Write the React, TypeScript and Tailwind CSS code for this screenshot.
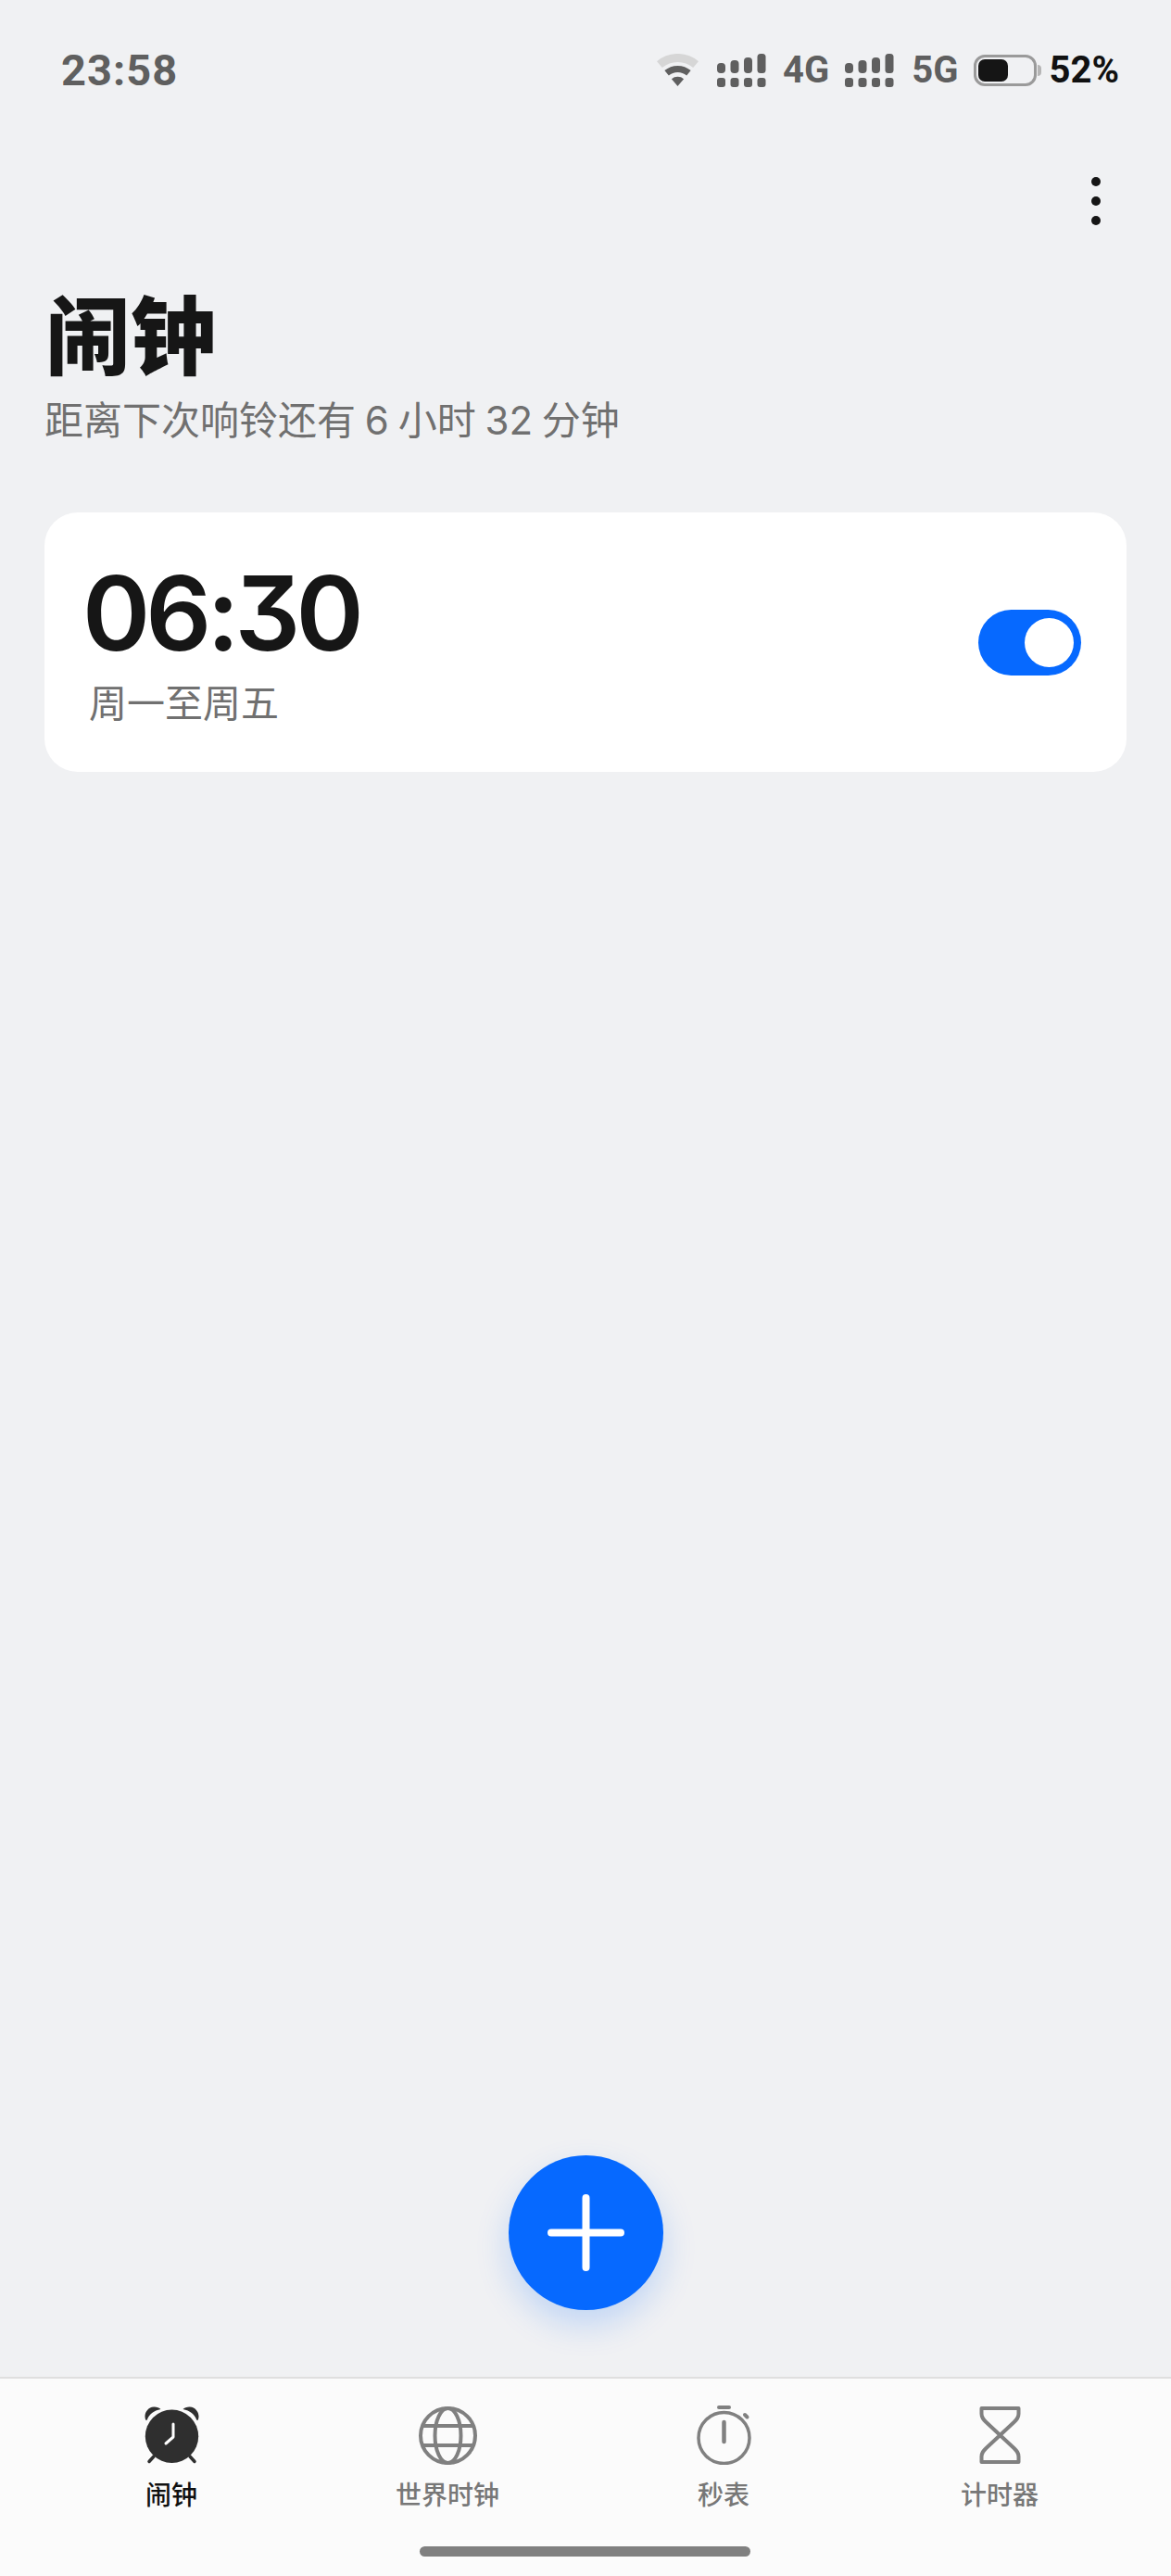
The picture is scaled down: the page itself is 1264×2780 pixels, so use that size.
import React from 'react';

const sans = "font-['Inter','Noto_Sans_CJK_SC',sans-serif]";

// status bar signal bars, 4 columns over a row of dots
const Signal = () => (
  <svg width="53" height="36" viewBox="0 0 53 36" className="block" fill="#5f5f5f">
    <rect x="0" y="10" width="9" height="11" rx="4" />
    <rect x="14.5" y="7" width="9" height="14" rx="4" />
    <rect x="29" y="4" width="9" height="17" rx="4" />
    <rect x="43.5" y="0" width="9" height="21" rx="3.5" />
    <rect x="0" y="26" width="9" height="10" rx="3" />
    <rect x="14.5" y="26" width="9" height="10" rx="3" />
    <rect x="29" y="26" width="9" height="10" rx="3" />
    <rect x="43.5" y="26" width="9" height="10" rx="3" />
  </svg>
);

const Wifi = () => (
  <svg width="45" height="36" viewBox="0 0 45 36" className="block" fill="none">
    <path d="M2.9 11.6A30.5 30.5 0 0 1 42.1 11.6" stroke="#d6d6d6" strokeWidth="9" />
    <path d="M10.6 20.8A18.5 18.5 0 0 1 34.4 20.8" stroke="#5f5f5f" strokeWidth="7" />
    <path d="M22.5 35L15.9 27.3A10 10 0 0 1 29.1 27.3Z" fill="#5f5f5f" />
  </svg>
);

const AlarmIcon = () => (
  <svg width="59" height="62" viewBox="0 0 59 62" className="block" fill="#2f2f2f">
    <path d="M1 14C-1 8 3 1 10 .5 13 .3 16 1.5 17.5 3 10 4.5 5 8.500 3 14 2.500 15.200 1.500 15.200 1 14Z" />
    <path d="M58 14C60 8 56 1 49 .5 46 .3 43 1.500 41.500 3 49 4.500 54 8.500 56 14 56.500 15.200 57.500 15.200 58 14Z" />
    <circle cx="29.500" cy="32.300" r="28.700" />
    <path d="M10 54L5 59.500M49 54L54 59.500" stroke="#2f2f2f" strokeWidth="3.500" strokeLinecap="round" />
    <path d="M31 19V33L23 40" fill="none" stroke="#fff" strokeWidth="3" strokeLinecap="round" strokeLinejoin="round" />
  </svg>
);

const GlobeIcon = () => (
  <svg width="63" height="63" viewBox="0 0 63 63" className="block" fill="none" stroke="#808080" strokeWidth="4">
    <circle cx="31.500" cy="31.500" r="29.500" />
    <ellipse cx="31.500" cy="31.500" rx="14" ry="29.500" />
    <path d="M5 21H58M5 42H58" />
  </svg>
);

const StopwatchIcon = () => (
  <svg width="59" height="64" viewBox="0 0 59 64" className="block" fill="none" stroke="#808080">
    <circle cx="29.500" cy="35" r="27.500" strokeWidth="3.500" />
    <path d="M24 2H35" strokeWidth="4" strokeLinecap="round" />
    <path d="M52 10L54.500 12.500" strokeWidth="4" strokeLinecap="round" />
    <path d="M29.500 18V39" strokeWidth="4.500" strokeLinecap="round" />
  </svg>
);

const HourglassIcon = () => (
  <svg width="45" height="62" viewBox="0 0 45 62" className="block" fill="none" stroke="#808080" strokeWidth="4" strokeLinejoin="round">
    <path d="M2.500 2H42.500V8C42.500 12 40.500 14 37.500 17L7.500 45C4.500 48 2.500 50 2.500 54V60H42.500V54C42.500 50 40.500 48 37.500 45L7.500 17C4.500 14 2.500 12 2.500 8Z" />
  </svg>
);

const tabs = [
  { label: '闹钟', icon: <AlarmIcon />, active: true },
  { label: '世界时钟', icon: <GlobeIcon />, active: false },
  { label: '秒表', icon: <StopwatchIcon />, active: false },
  { label: '计时器', icon: <HourglassIcon />, active: false },
];

const App = () => {
  return (
    <div className={`h-[2780px] w-[1264px] flex flex-col bg-[#f0f1f3] overflow-hidden ${sans}`}>
      {/* Status bar */}
      <div className="mt-[57px] h-[37px] pl-[66px] pr-[56px] flex items-center justify-between">
        <span className="text-[47px] leading-[37px] font-bold tracking-[1px] text-[#5f5f5f] font-['Roboto',sans-serif]">23:58</span>
        <div className="flex items-center font-['Roboto',sans-serif] font-bold text-[40px] leading-[37px] text-[#5f5f5f]">
          <Wifi />
          <div className="ml-[20px]"><Signal /></div>
          <span className="ml-[18px]">4G</span>
          <div className="ml-[17px]"><Signal /></div>
          <span className="ml-[19px]">5G</span>
          <div className="ml-[16px] flex items-center">
            <div className="w-[68px] h-[34px] rounded-[12px] border-[3px] border-[#9a9a9a] p-[2px]">
              <div className="w-[32px] h-full rounded-[7px] bg-[#151515]"></div>
            </div>
            <div className="ml-[1px] w-[4px] h-[12px] rounded-r-full bg-[#b5b5b5]"></div>
          </div>
          <span className="ml-[9px] text-[#111111]">52%</span>
        </div>
      </div>

      {/* Overflow menu */}
      <div className="mt-[97px] h-[52px] pr-[76px] flex justify-end">
        <div className="flex flex-col justify-between">
          <div className="w-[10px] h-[10px] rounded-full bg-[#151515]"></div>
          <div className="w-[10px] h-[10px] rounded-full bg-[#151515]"></div>
          <div className="w-[10px] h-[10px] rounded-full bg-[#151515]"></div>
        </div>
      </div>

      {/* Title */}
      <div className="px-[48px]">
        <h1 className="mt-[69px] pl-[1px] text-[92px] leading-[104px] font-black text-[#161616]">闹钟</h1>
        <p className="mt-[13px] text-[42px] leading-[50px] [word-spacing:-2px] text-[#707070]">距离下次响铃还有 6 小时 32 分钟</p>
      </div>

      {/* Alarm card */}
      <div className="mx-[48px] mt-[74px] h-[280px] rounded-[36px] bg-white pl-[44px] pr-[49px] flex items-center justify-between">
        <div className="flex flex-col gap-[15px]">
          <div className="text-[111px] leading-[116px] font-semibold tracking-[-5px] text-[#161616] [font-feature-settings:'cv09'] -ml-[3px]">06:30</div>
          <div className="text-[41px] leading-[48px] text-[#707070] ml-[4px]">周一至周五</div>
        </div>
        <div className="w-[111px] h-[71px] rounded-full bg-[#0669ff] flex items-center justify-end pr-[8px]">
          <div className="w-[53px] h-[53px] rounded-full bg-white"></div>
        </div>
      </div>

      {/* Add button */}
      <div className="mt-auto mb-[72px] flex justify-center">
        <div className="w-[167px] h-[167px] rounded-full bg-[#0669ff] shadow-[0_16px_36px_rgba(6,105,255,0.2)] flex items-center justify-center">
          <svg width="83" height="83" viewBox="0 0 83 83" className="block" stroke="#fff" strokeWidth="8" strokeLinecap="round">
            <path d="M41.500 4V79M4 41.500H79" />
          </svg>
        </div>
      </div>

      {/* Bottom navigation */}
      <div className="h-[215px] bg-[#fbfbfb] border-t-2 border-[#dfdfdf] relative">
        <div className="px-[36px] pt-[28px] grid grid-cols-4">
          {tabs.map((tab) => (
            <div key={tab.label} className="flex flex-col items-center">
              <div className="h-[66px] flex items-center justify-center">{tab.icon}</div>
              <span className={`mt-[15px] text-[28px] leading-[34px] font-medium ${tab.active ? 'text-[#111111]' : 'text-[#777777]'}`}>
                {tab.label}
              </span>
            </div>
          ))}
        </div>
        <div className="absolute left-[453px] bottom-[21px] w-[357px] h-[11px] rounded-full bg-[#808080]"></div>
      </div>
    </div>
  );
};

export default App;
